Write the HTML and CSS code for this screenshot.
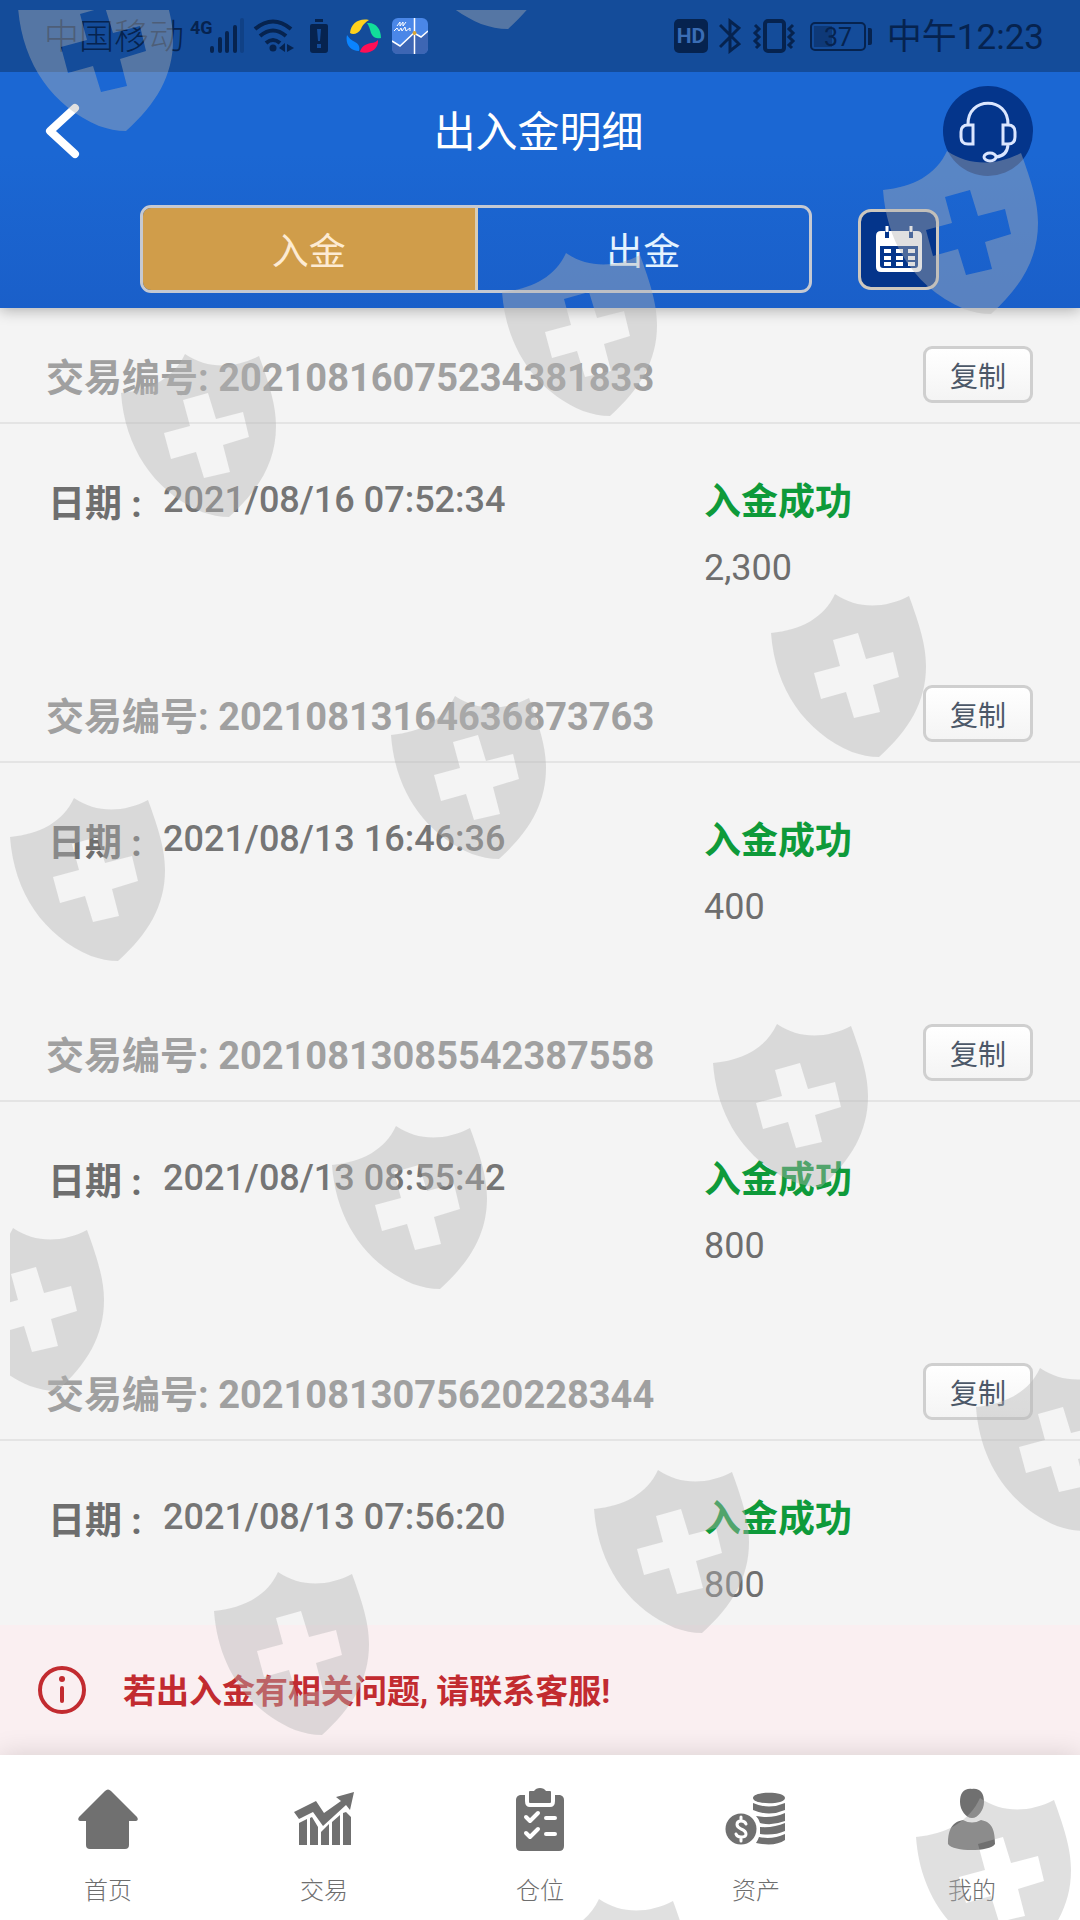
FILE: index.html
```html
<!DOCTYPE html>
<html lang="zh-CN">
<head>
<meta charset="utf-8">
<meta name="viewport" content="width=device-width, initial-scale=1">
<title>出入金明细</title>
<link rel="stylesheet" href="styles.css">
</head>
<body>
<header class="header">
  <div class="status">
    <div class="status-group">
      <span class="carrier">中国移动</span>
      <svg class="status-signal" width="56" height="36" viewBox="0 0 56 36" aria-hidden="true">
        <text class="net" x="1" y="16">4G</text>
        <g class="bars"><path d="M23 33V30M31 33V21M38 33V15M46 33V9"/><path class="bar-off" d="M53 33V2"/></g>
      </svg>
      <svg class="status-wifi" width="42" height="36" viewBox="0 0 42 36" aria-hidden="true">
        <g fill="none" stroke="currentColor" stroke-width="4"><path d="M2 11Q20 -4 38 11M7 18Q20 7 33 18M13 25Q20 19 27 25"/></g>
        <circle cx="20" cy="30" r="3.500"/><path d="M32 25V34L26 30ZM34 26L41 30L34 34Z"/>
      </svg>
      <svg class="status-alert" width="20" height="36" viewBox="0 0 20 36" aria-hidden="true">
        <path d="M6 1H14V4H6ZM3 6H17Q19 6 19 8V32Q19 35 16 35H4Q1 35 1 32V8Q1 6 3 6Z"/><path class="alert-mark" d="M8 11H12L11 23H9ZM8 26H12V30H8Z"/>
      </svg>
      <svg class="status-ring" width="36" height="36" viewBox="0 0 36 36" aria-hidden="true">
        <path fill="#ffd21c" d="M4 15C5 5 13 0 23 2C20 4 17 6 15 11C12 16 7 17 4 15Z"/>
        <path fill="#12de9a" d="M21 5C30 4 35 11 35 20C32 21 27 20 25 15C24 11 23 8 21 5Z"/>
        <path fill="#ff0f55" d="M32 22C33 31 24 37 14 34C15 29 19 26 25 25C28 25 30 24 32 22Z"/>
        <path fill="#0a84ff" d="M1 17C-1 26 4 33 13 33C14 29 13 26 9 24C5 22 3 20 1 17Z"/>
      </svg>
      <svg class="status-app" width="36" height="36" viewBox="0 0 36 36" aria-hidden="true">
        <rect width="36" height="36" rx="6" fill="#4a87e8"/><path d="M0 23L8 28L22 15L29 19L36 13V30Q36 36 30 36H6Q0 36 0 30Z" fill="#3d66b4"/>
        <path d="M0 23L8 28L22 15L29 19L36 13M22.500 0V36" fill="none" stroke="#fff" stroke-width="1.500"/>
        <path d="M5 8L8 4L8 8L11 4L11 8L14 4M2 13L5 10L7 13L9 10L10 13L13 9L14 13L18 10V13" fill="none" stroke="#fff"/><circle cx="22.500" cy="15" r="2" fill="#d9a637"/>
      </svg>
    </div>
    <div class="status-group">
      <svg class="status-hd" width="34" height="36" viewBox="0 0 34 36" aria-hidden="true"><rect y="1" width="34" height="34" rx="5"/><text class="hd" x="17" y="25">HD</text></svg>
      <svg class="status-bt" width="22" height="36" viewBox="0 0 22 36" aria-hidden="true"><path d="M1 7L20 26L11 33V3L20 10L1 29" fill="none" stroke="currentColor" stroke-width="3"/></svg>
      <svg class="status-vib" width="44" height="36" viewBox="0 0 44 36" aria-hidden="true"><g fill="none" stroke="currentColor" stroke-width="3"><rect x="13" y="3" width="19" height="30" rx="3" stroke-width="4"/><path d="M3 7L7 11L3 15L7 19L3 23L7 27L4 30M41 7L37 11L41 15L37 19L41 23L37 27L40 30"/></g></svg>
      <svg class="status-batt" width="64" height="36" viewBox="0 0 64 36" aria-hidden="true"><rect x="1" y="5" width="54" height="27" rx="4" fill="none" stroke="currentColor" stroke-width="2"/><path class="charge" d="M4 8H22V29H4Z"/><path d="M58 10H60Q62 10 62 12V25Q62 27 60 27H58Z"/><text class="batt" x="28" y="28">37</text></svg>
      <time class="clock">中午12:23</time>
    </div>
  </div>
  <div class="titlebar">
    <a class="back" href="#" aria-label="返回"><svg width="36" height="56" viewBox="0 0 36 56"><path d="M31 5L6 28L31 51" fill="none" stroke="#fff" stroke-width="8" stroke-linecap="round" stroke-linejoin="round"/></svg></a>
    <h1 class="title">出入金明细</h1>
    <button class="service" type="button" aria-label="客服"><svg width="60" height="64" viewBox="0 0 60 64"><g fill="none" stroke="#dbe6ff" stroke-width="3"><path d="M10 26C9 -3 51 -3 50 26"/><path d="M15 26H10Q3 26 3 33V38Q3 45 10 45H15ZM45 26H50Q57 26 57 33V38Q57 45 50 45H45Z"/><path d="M50 46Q49 57 38 58"/><ellipse cx="32" cy="58" rx="6" ry="4"/></g></svg></button>
  </div>
  <div class="tools">
    <div class="tabs" role="tablist">
      <button class="tab tab-active" type="button" role="tab" aria-selected="true">入金</button>
      <button class="tab" type="button" role="tab" aria-selected="false">出金</button>
    </div>
    <button class="calendar" type="button" aria-label="选择日期"><svg width="48" height="48" viewBox="0 0 48 48"><path fill="#fff" fill-rule="evenodd" d="M6 6H42Q47 6 47 11V42Q47 47 42 47H6Q1 47 1 42V11Q1 6 6 6ZM5 21V40Q5 43 8 43H40Q43 43 43 40V21Z"/><path d="M12 3V13M36 3V13" stroke="#04358b" stroke-width="4"/><path d="M12 1V7M36 1V7" stroke="#fff" stroke-width="3"/><path d="M9 26H16M21 26H28M33 26H40M9 33H16M21 33H28M33 33H40M9 39H16M21 39H28M33 39H40" stroke="#fff" stroke-width="4"/></svg></button>
  </div>
</header>

<main class="list">
  <article class="item">
    <div class="item-head"><h2 class="number">交易编号: 20210816075234381833</h2><button class="copy" type="button">复制</button></div>
    <div class="detail"><span class="label">日期 :</span><time class="date">2021/08/16 07:52:34</time><div class="result"><span class="state">入金成功</span><span class="amount">2,300</span></div></div>
  </article>
  <article class="item">
    <div class="item-head"><h2 class="number">交易编号: 20210813164636873763</h2><button class="copy" type="button">复制</button></div>
    <div class="detail"><span class="label">日期 :</span><time class="date">2021/08/13 16:46:36</time><div class="result"><span class="state">入金成功</span><span class="amount">400</span></div></div>
  </article>
  <article class="item">
    <div class="item-head"><h2 class="number">交易编号: 20210813085542387558</h2><button class="copy" type="button">复制</button></div>
    <div class="detail"><span class="label">日期 :</span><time class="date">2021/08/13 08:55:42</time><div class="result"><span class="state">入金成功</span><span class="amount">800</span></div></div>
  </article>
  <article class="item">
    <div class="item-head"><h2 class="number">交易编号: 20210813075620228344</h2><button class="copy" type="button">复制</button></div>
    <div class="detail"><span class="label">日期 :</span><time class="date">2021/08/13 07:56:20</time><div class="result"><span class="state">入金成功</span><span class="amount">800</span></div></div>
  </article>
</main>

<aside class="notice">
  <svg width="48" height="48" viewBox="0 0 48 48" aria-hidden="true"><circle cx="24" cy="24" r="22" fill="none" stroke="#c22b30" stroke-width="4"/><circle cx="24" cy="13" r="3" fill="#c22b30"/><path d="M24 22V35" stroke="#c22b30" stroke-width="4" stroke-linecap="round"/></svg>
  <p class="notice-text">若出入金有相关问题, 请联系客服!</p>
</aside>

<nav class="nav">
  <a class="nav-item" href="#"><svg width="64" height="64" viewBox="0 0 64 64"><path d="M10 33H4Q1 32 3 29L29 3Q32 0 35 3L61 29Q63 32 60 33H53V57Q53 61 49 61H14Q10 61 10 57Z"/></svg>首页</a>
  <a class="nav-item" href="#"><svg width="64" height="64" viewBox="0 0 64 64"><path d="M2 24L24 13L32 25L49 13L44 9L62 4L58 22L54 17L31 38L21 24L7 31ZM7 35L15 31V57H7ZM18 30L20 29L26 39V57H18ZM29 44L37 36V57H29ZM40 34L48 27V57H40ZM51 25L54 24L59 29V57H51Z"/></svg>交易</a>
  <a class="nav-item" href="#"><svg width="64" height="64" viewBox="0 0 64 64"><path d="M12 7H17V13Q17 19 22 19H42Q47 19 47 13V7H52Q56 8 56 12V58Q56 63 51 63H13Q8 63 8 58V12Q8 8 12 7ZM21 4Q21 3 22 3H26Q28 0 32 0Q36 0 38 3H42Q43 3 43 4V14Q43 15 42 15H22Q21 15 21 14Z"/><path class="cut" d="M18 29L22 33L30 25M18 45L22 49L30 41M38 30H47M38 46H47"/></svg>仓位</a>
  <a class="nav-item" href="#"><svg width="64" height="64" viewBox="0 0 64 64"><path d="M29 10C29 3 61 3 61 10C61 17 29 17 29 10ZM29 15Q45 22 61 15V22Q45 29 29 22ZM32 28Q48 31 61 25V33Q48 38 36 35Q35 31 32 28ZM36 39Q50 40 61 35V43Q50 48 36 46ZM35 49Q48 52 61 46V52Q51 59 32 55Q34 52 35 49Z"/><circle cx="17" cy="41" r="15.500"/><path class="dollar" d="M22 36Q21 33 17 33Q13 33 13 36.500Q13 39 17 41Q22 43 22 46Q22 49 17 49Q13 49 12 46M17 29V33M17 49V53"/></svg>资产</a>
  <a class="nav-item" href="#"><svg width="64" height="64" viewBox="0 0 64 64"><path d="M32 1C40 0 44 5 44 14C44 22 38 30 32 30C26 30 20 22 20 14C20 5 24 0 32 1ZM23 32Q32 37 41 32C51 34 55 40 55 56C50 64 13 64 8 56C8 40 13 34 23 32Z"/></svg>我的</a>
</nav>

<svg class="watermark" width="100%" height="100%" aria-hidden="true">
  <defs><path id="shield" fill-rule="evenodd" d="M0 39C30 36 53 24 64 0C86 15 113 15 138 2C149 32 155 52 155 72C155 108 138 136 108 163C99 163 90 161 81 158C34 138 4 95 0 39ZM62 46L87 39L95 65L122 58L128 83L102 91L109 118L83 124L75 98L50 105L43 79L69 72Z"/></defs>
  <g transform="translate(-10 -10)">
    <use href="#shield" x="18" y="-32"/><use href="#shield" x="400" y="-134"/>
    <use href="#shield" x="883" y="151"/><use href="#shield" x="502" y="253"/><use href="#shield" x="121" y="354"/>
    <use href="#shield" x="771" y="594"/><use href="#shield" x="391" y="696"/><use href="#shield" x="10" y="798"/>
    <use href="#shield" x="713" y="1024"/><use href="#shield" x="332" y="1126"/><use href="#shield" x="-51" y="1228"/>
    <use href="#shield" x="976" y="1368"/><use href="#shield" x="594" y="1470"/><use href="#shield" x="214" y="1572"/>
    <use href="#shield" x="916" y="1798"/><use href="#shield" x="535" y="1899"/>
  </g>
</svg>
</body>
</html>
```
FILE: styles.css
```css
* { box-sizing: border-box; }

body {
  position: relative;
  display: flex;
  flex-direction: column;
  height: 100vh;
  margin: 0;
  overflow: hidden;
  background: #f4f4f4;
  color: #6e6e6e;
  font-family: Roboto, "Noto Sans CJK SC", sans-serif;
}

button { padding: 0; font-family: inherit; cursor: pointer; }
svg { display: block; flex: none; }
h1, h2, p { margin: 0; }

/* header */
.header {
  position: relative;
  flex: none;
  padding-bottom: 15px;
  background: linear-gradient(#1b67d3 50%, #1a5fc9);
  box-shadow: 0 2px 14px rgba(0, 0, 0, 0.3);
}

.status {
  display: flex;
  justify-content: space-between;
  height: 72px;
  padding: 0 36px 0 44px;
  background: #144c9a;
  color: #06234f;
}
.status-group { display: flex; align-items: center; }
.status-group svg { fill: currentColor; }
.carrier, .clock { padding-top: 4px; font-size: 35px; line-height: 68px; font-weight: 300; }
.clock { margin-left: 13px; font-weight: 400; }
.status-signal { margin-left: 5px; }
.net { font-size: 18px; font-weight: 700; }
.bars { stroke: currentColor; stroke-width: 4; stroke-linecap: round; }
.bar-off { opacity: 0.25; }
.status-wifi { margin-left: 8px; }
.status-alert { margin-left: 14px; }
.status-group .alert-mark { fill: #144c9a; }
.status-ring { margin-left: 17px; }
.status-app { margin-left: 10px; }
.status-group .hd { fill: #3a6db5; font-size: 21px; font-weight: 700; text-anchor: middle; }
.status-bt { margin-left: 11px; }
.status-vib { margin-left: 11px; }
.status-batt { margin-left: 14px; }
.charge { opacity: 0.45; }
.batt { font-size: 25px; text-anchor: middle; }

.titlebar {
  display: flex;
  align-items: center;
  justify-content: space-between;
  height: 118px;
  padding: 0 47px 0 44px;
}
.back { width: 90px; }
.title { padding-top: 4px; color: #fff; font-size: 42px; line-height: 60px; font-weight: 400; }
.service {
  display: flex;
  align-items: center;
  justify-content: center;
  width: 90px;
  height: 90px;
  border: 0;
  border-radius: 50%;
  background: #04358b;
}

.tools {
  display: flex;
  align-items: center;
  gap: 46px;
  padding: 15px 141px 0 140px;
}
.tabs {
  display: flex;
  flex: 1;
  height: 88px;
  overflow: hidden;
  border: 3px solid #c5c9d2;
  border-radius: 11px;
}
.tab {
  flex: 1;
  border: 0;
  background: transparent;
  color: #e4f3ff;
  font-size: 37px;
}
.tab-active {
  border-right: 3px solid #d8cdb6;
  background: #d09d4a;
  color: #fdebd3;
}
.calendar {
  display: flex;
  align-items: center;
  justify-content: center;
  width: 81px;
  height: 81px;
  border: 3px solid #cdc7be;
  border-radius: 13px;
  background: #04358b;
}

/* transactions */
.list { flex: 1 1 0; min-height: 0; overflow-y: auto; scrollbar-width: none; }
.item { height: 339px; }
.item-head {
  display: flex;
  align-items: flex-end;
  justify-content: space-between;
  padding: 38px 47px 19px 46px;
  border-bottom: 2px solid #e4e4e4;
}
.number { color: #a0a0a0; font-size: 38px; line-height: 50px; font-weight: 700; }
.copy {
  width: 110px;
  height: 57px;
  border: 3px solid #cfcfcf;
  border-radius: 9px;
  background: linear-gradient(#fff, #f4f4f4);
  color: #4c5868;
  font-size: 28px;
}
.detail {
  display: grid;
  grid-template-columns: 115px 1fr 328px;
  align-items: start;
  padding: 54px 48px 0;
}
.label { font-size: 37px; line-height: 54px; font-weight: 700; }
.date { color: #757575; font-size: 36px; line-height: 44px; font-weight: 500; }
.result { display: grid; gap: 18px; }
.state { color: #0e9a3a; font-size: 37px; line-height: 50px; font-weight: 700; }
.amount { font-size: 36px; line-height: 44px; }

/* notice */
.notice {
  display: flex;
  flex: none;
  align-items: center;
  gap: 37px;
  height: 130px;
  padding: 0 38px;
  background: #faeff1;
}
.notice-text { padding-top: 4px; color: #c22b30; font-size: 33px; line-height: 48px; font-weight: 700; }

/* bottom navigation */
.nav {
  position: relative;
  display: grid;
  flex: none;
  grid-template-columns: repeat(5, 1fr);
  height: 165px;
  background: #fff;
  box-shadow: 0 0 26px rgba(0, 0, 0, 0.14);
}
.nav-item {
  display: flex;
  flex-direction: column;
  align-items: center;
  gap: 21px;
  padding-top: 33px;
  color: #6e6e6e;
  font-size: 24px;
  line-height: 36px;
  font-weight: 300;
  text-decoration: none;
}
.nav-item svg { fill: #707070; }
.nav-item .cut, .nav-item .dollar { fill: none; stroke: #fff; stroke-width: 4; stroke-linecap: round; stroke-linejoin: round; }
.nav-item .dollar { stroke-width: 3; }

/* shield pattern over the page */
.watermark {
  position: absolute;
  top: 10px;
  left: 10px;
  overflow: hidden;
  pointer-events: none;
  fill: rgba(180, 180, 180, 0.41);
}
```
